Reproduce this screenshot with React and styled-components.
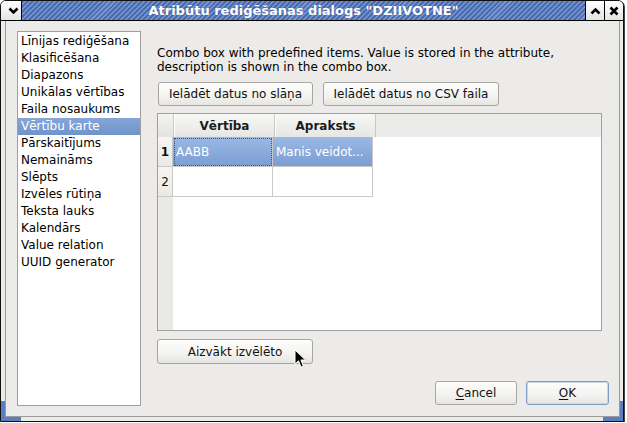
import React from "react";
import styled, { createGlobalStyle } from "styled-components";

const GlobalStyle = createGlobalStyle`
  html, body {
    margin: 0;
    padding: 0;
    background: #ffffff;
  }
  body {
    font-family: "DejaVu Sans", "Liberation Sans", sans-serif;
    font-size: 12px;
    color: #000;
  }
`;

const categories = [
  "Līnijas rediģēšana",
  "Klasificēšana",
  "Diapazons",
  "Unikālas vērtības",
  "Faila nosaukums",
  "Vērtību karte",
  "Pārskaitījums",
  "Nemaināms",
  "Slēpts",
  "Izvēles rūtiņa",
  "Teksta lauks",
  "Kalendārs",
  "Value relation",
  "UUID generator",
];

const rows = [
  { value: "AABB", description: "Manis veidot..." },
  { value: "", description: "" },
];

const ChevronDown = () => (
  <svg width="11" height="8" viewBox="0 0 11 8">
    <path d="M1.5 1.5 L5.5 5.5 L9.5 1.5" fill="none" stroke="#000" strokeWidth="2.6" />
  </svg>
);

const ChevronUp = () => (
  <svg width="11" height="8" viewBox="0 0 11 8">
    <path d="M1.5 6.5 L5.5 2.5 L9.5 6.5" fill="none" stroke="#000" strokeWidth="2.6" />
  </svg>
);

const CloseIcon = () => (
  <svg width="10" height="10" viewBox="0 0 10 10">
    <path d="M1.5 1.5 L8.5 8.5 M8.5 1.5 L1.5 8.5" fill="none" stroke="#000" strokeWidth="2.6" />
  </svg>
);

const Pointer = () => (
  <svg width="13" height="20" viewBox="0 0 13 20">
    <path
      d="M1 1 L1 15 L4.5 11.8 L7 18 L9.3 17 L6.9 11 L11.5 11 Z"
      fill="#000"
      stroke="#fff"
      strokeWidth="1"
      strokeLinejoin="round"
    />
  </svg>
);

export default function App() {
  return (
    <>
      <GlobalStyle />
      <S.Window>
        <S.TitleBar>
          <S.TitleButton $side="left">
            <ChevronDown />
          </S.TitleButton>
          <S.TitleText>Atribūtu rediģēšanas dialogs "DZIIVOTNE"</S.TitleText>
          <S.TitleButton>
            <ChevronUp />
          </S.TitleButton>
          <S.TitleButton $last>
            <CloseIcon />
          </S.TitleButton>
        </S.TitleBar>

        <S.Frame>
          <S.Dialog>
            <S.CategoryList>
              {categories.map((name) => (
                <S.Category key={name} $selected={name === "Vērtību karte"}>
                  {name}
                </S.Category>
              ))}
            </S.CategoryList>

            <S.Panel>
              <S.Hint>
                Combo box with predefined items. Value is stored in the attribute,
                <br />
                description is shown in the combo box.
              </S.Hint>

              <S.ButtonRow>
                <S.Button $w={155}>Ielādēt datus no slāņa</S.Button>
                <S.Button $w={176}>Ielādēt datus no CSV faila</S.Button>
              </S.ButtonRow>

              <S.Table>
                <S.HeaderRow>
                  <S.Corner />
                  <S.HeadCell>Vērtība</S.HeadCell>
                  <S.HeadCell>Apraksts</S.HeadCell>
                </S.HeaderRow>
                <S.TableBody>
                  <S.RowHeads>
                    {rows.map((r, i) => (
                      <S.RowHead key={i} $current={i === 0}>
                        {i + 1}
                      </S.RowHead>
                    ))}
                  </S.RowHeads>
                  <S.Cells>
                    {rows.map((r, i) => (
                      <React.Fragment key={i}>
                        <S.Cell $selected={i === 0} $focused={i === 0}>
                          {r.value}
                        </S.Cell>
                        <S.Cell $selected={i === 0}>{r.description}</S.Cell>
                      </React.Fragment>
                    ))}
                  </S.Cells>
                </S.TableBody>
              </S.Table>

              <S.RemoveRow>
                <S.Button $w={156} $h={25}>
                  Aizvākt izvēlēto
                  <S.Cursor>
                    <Pointer />
                  </S.Cursor>
                </S.Button>
              </S.RemoveRow>

              <S.DialogButtons>
                <S.Button $w={82}>
                  <u>C</u>ancel
                </S.Button>
                <S.Button $w={83} $default>
                  <u>O</u>K
                </S.Button>
              </S.DialogButtons>
            </S.Panel>
          </S.Dialog>
        </S.Frame>
      </S.Window>
    </>
  );
}

const S = {
  Window: styled.div`
    width: 624px;
    height: 422px;
    box-sizing: border-box;
    border: 1px solid #111;
    border-radius: 6px 6px 0 0;
    overflow: hidden;
    display: flex;
    flex-direction: column;
    background: #ebebe9;
    box-shadow: 1px 1px 0 #444;
  `,
  TitleBar: styled.div`
    height: 19px;
    flex: none;
    display: flex;
    border-bottom: 1px solid #000;
  `,
  TitleButton: styled.div`
    width: ${(p) => (p.$side === "left" ? 21 : 19)}px;
    flex: none;
    box-sizing: border-box;
    display: flex;
    align-items: center;
    justify-content: center;
    padding-left: ${(p) => (p.$side === "left" ? 4 : 0)}px;
    background: linear-gradient(#ffffff, #e4e4e2);
    border-right: ${(p) => (p.$side === "left" ? "1px solid #000" : "none")};
    border-left: ${(p) => (p.$side === "left" ? "none" : "1px solid #000")};
  `,
  TitleText: styled.div`
    flex: 1;
    display: flex;
    align-items: center;
    justify-content: center;
    color: #fff;
    font-weight: bold;
    font-size: 13px;
    text-shadow: 0 0 1px #3a5689;
    background: repeating-linear-gradient(
      135deg,
      #4a6cb1 0px,
      #4a6cb1 2px,
      #7794d0 2px,
      #7794d0 3.5px
    );
  `,
  Frame: styled.div`
    flex: 1;
    display: flex;
    position: relative;
    padding: 0 3px 4px 4px;
    background: #ebebe9;
    /* resize grips in the two lower corners */
    &::before,
    &::after {
      content: "";
      position: absolute;
      bottom: 0;
      width: 20px;
      height: 20px;
      box-sizing: border-box;
      border-bottom: 4px solid #5b7ec1;
    }
    &::before {
      left: 0;
      border-left: 4px solid #5b7ec1;
    }
    &::after {
      right: 0;
      border-right: 3px solid #5b7ec1;
    }
  `,
  Dialog: styled.div`
    flex: 1;
    display: grid;
    grid-template-columns: 124px 1fr;
    column-gap: 16px;
    padding: 10px 10px 10px 11px;
    border: 1px solid #9c9b98;
    border-top: none;
    background: #ecebe9;
  `,
  CategoryList: styled.div`
    background: #fff;
    border: 1px solid #a09f9c;
    padding-top: 1px;
    display: flex;
    flex-direction: column;
  `,
  Category: styled.div`
    height: 17px;
    line-height: 17px;
    padding-left: 3px;
    white-space: nowrap;
    color: ${(p) => (p.$selected ? "#fff" : "#000")};
    background: ${(p) =>
      p.$selected ? "linear-gradient(#86a6d8, #6f93cb)" : "transparent"};
  `,
  Panel: styled.div`
    display: flex;
    flex-direction: column;
  `,
  Hint: styled.div`
    margin-top: 15px;
    line-height: 14px;
  `,
  ButtonRow: styled.div`
    display: flex;
    gap: 10px;
    margin: 8px 0 0 1px;
  `,
  Button: styled.div`
    position: relative;
    width: ${(p) => p.$w}px;
    height: ${(p) => p.$h || 24}px;
    box-sizing: border-box;
    display: flex;
    align-items: center;
    justify-content: center;
    white-space: nowrap;
    color: #111;
    border: 1px solid ${(p) => (p.$default ? "#7f9bc6" : "#a6a5a2")};
    border-radius: 3px;
    background: linear-gradient(#fdfdfc, #f3f3f1 60%, #e6e5e2);
    box-shadow: ${(p) =>
      p.$default ? "inset 0 0 0 1px #c9d7ec" : "inset 0 1px 0 #fff"};
    u {
      text-decoration: underline;
      text-underline-offset: 2px;
    }
  `,
  Cursor: styled.span`
    position: absolute;
    left: 136px;
    top: 9px;
    display: flex;
  `,
  Table: styled.div`
    margin-top: 7px;
    width: 445px;
    height: 218px;
    box-sizing: border-box;
    border: 1px solid #a09f9c;
    display: flex;
    flex-direction: column;
    background: #fff;
  `,
  HeaderRow: styled.div`
    height: 23px;
    flex: none;
    display: flex;
    background: #ebebe9;
  `,
  Corner: styled.div`
    width: 15px;
    border-right: 1px solid #c9c8c5;
    background: linear-gradient(#f4f4f2, #e3e3e0);
  `,
  HeadCell: styled.div`
    width: 99px;
    display: flex;
    align-items: center;
    justify-content: center;
    font-weight: bold;
    color: #1c1c1c;
    border-right: 1px solid #c9c8c5;
    border-left: 1px solid #fff;
    background: linear-gradient(#f7f7f5, #e6e6e3);
  `,
  TableBody: styled.div`
    flex: 1;
    display: flex;
  `,
  RowHeads: styled.div`
    width: 15px;
    flex: none;
    background: #e9e9e7;
    display: flex;
    flex-direction: column;
  `,
  RowHead: styled.div`
    height: 29px;
    display: flex;
    align-items: center;
    justify-content: center;
    font-weight: ${(p) => (p.$current ? "bold" : "normal")};
    color: #111;
    border-bottom: 1px solid #c9c8c5;
    border-right: 1px solid #c9c8c5;
    background: linear-gradient(#f5f5f3, #e9e9e6);
  `,
  Cells: styled.div`
    flex: 1;
    display: grid;
    grid-template-columns: 100px 100px;
    grid-auto-rows: 30px;
    align-content: start;
    background: #fff;
  `,
  Cell: styled.div`
    box-sizing: border-box;
    display: flex;
    align-items: center;
    padding-left: 3px;
    white-space: nowrap;
    overflow: hidden;
    color: ${(p) => (p.$selected ? "#fff" : "#000")};
    border-right: 1px solid #c9c9c9;
    border-bottom: 1px solid #c9c9c9;
    background: ${(p) =>
      p.$selected ? "linear-gradient(#9bb9e4, #7b9dd3)" : "#fff"};
    outline: ${(p) => (p.$focused ? "1px dotted #4a5566" : "none")};
    outline-offset: -2px;
  `,
  RemoveRow: styled.div`
    display: flex;
    margin-top: 8px;
  `,
  DialogButtons: styled.div`
    margin-top: auto;
    display: flex;
    justify-content: flex-end;
    gap: 9px;
    margin-bottom: 1px;
  `,
};
